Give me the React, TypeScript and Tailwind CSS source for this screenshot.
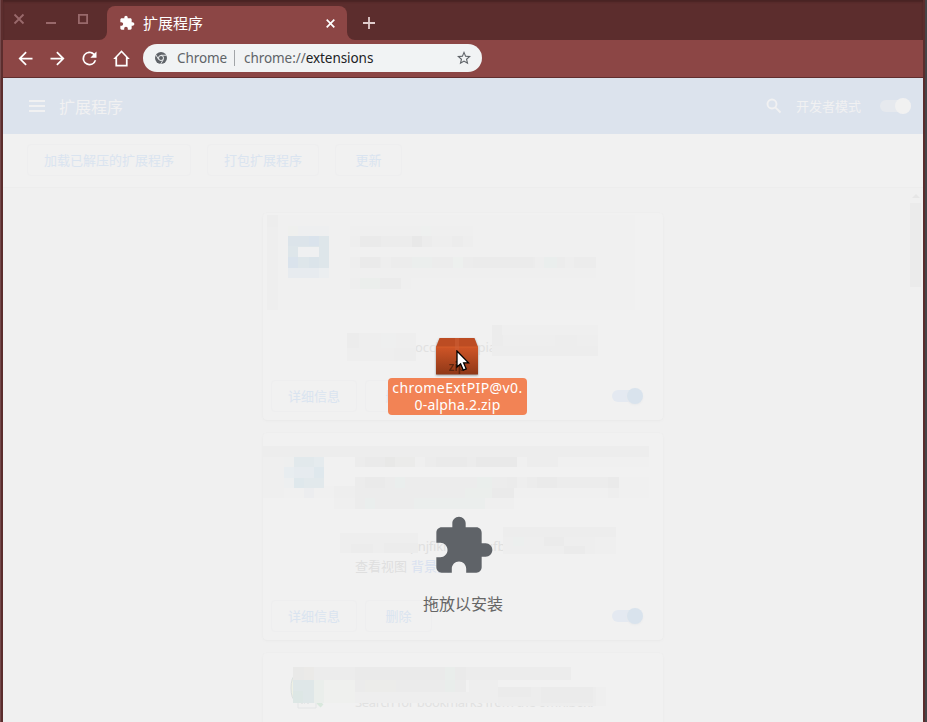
import React from "react";

type Cell = [number, number, number, number, string];

const UI = "font-['Noto_Sans','Noto_Sans_CJK_SC',sans-serif]";

function Mosaic({ cells }: { cells: Cell[] }) {
  return (
    <svg className="absolute left-0 top-0" width="400" height="207" viewBox="0 0 400 207" shapeRendering="crispEdges">
      {cells.map(([x, y, w, h, c], i) => (
        <rect key={i} x={x} y={y} width={w} height={h} fill={c} />
      ))}
    </svg>
  );
}

const firstCells: Cell[] = [
  [4, 2, 368, 95, "#f0f0f0"],
  [4, 2, 11, 95, "#eeeeee"],
  [4, 2, 11, 12, "#ededed"],
  [25, 13, 41, 10, "#eeeff0"],
  [25, 13, 10, 10, "#eff0ee"],
  [25, 23, 41, 32, "#dee6ea"],
  [25, 23, 21, 10, "#dce4ea"],
  [46, 23, 10, 10, "#dae3ec"],
  [25, 44, 10, 11, "#dae3ec"],
  [46, 44, 10, 11, "#dbe4ea"],
  [35, 34, 21, 10, "#eff0f1"],
  [25, 55, 41, 10, "#e7ebef"],
  [56, 55, 10, 10, "#ebeef0"],
  [87, 13, 123, 10, "#efefef"],
  [158, 13, 10, 10, "#eef0ef"],
  [87, 23, 123, 11, "#ececec"],
  [87, 23, 10, 11, "#eeeeee"],
  [97, 23, 21, 11, "#eaeaea"],
  [149, 23, 10, 11, "#e8e8e8"],
  [169, 23, 20, 11, "#eeeeee"],
  [200, 23, 10, 11, "#eeeeee"],
  [87, 44, 246, 11, "#ececec"],
  [87, 44, 10, 11, "#eeeeee"],
  [97, 44, 20, 11, "#eaeaea"],
  [118, 44, 10, 11, "#eeeeee"],
  [149, 44, 20, 11, "#ebeeed"],
  [190, 44, 10, 11, "#edf0ee"],
  [210, 44, 60, 11, "#ebebeb"],
  [272, 44, 9, 11, "#eeeeee"],
  [281, 44, 13, 11, "#eaeeed"],
  [302, 44, 9, 11, "#eeeeee"],
  [87, 55, 246, 10, "#efefef"],
  [87, 65, 51, 11, "#ebebeb"],
  [97, 65, 20, 11, "#ebeeec"],
  [87, 65, 10, 11, "#eeeeee"],
  [138, 65, 10, 11, "#efefef"],
  [84, 120, 69, 28, "#eeeeee"],
  [84, 120, 12, 15, "#ececec"],
  [118, 120, 15, 15, "#eeefef"],
  [131, 135, 22, 13, "#ededed"],
  [229, 112, 106, 31, "#eeeeee"],
  [229, 112, 11, 31, "#ececec"],
  [239, 112, 96, 10, "#efefef"],
  [292, 122, 22, 11, "#ededed"],
  [229, 133, 106, 10, "#ededed"],
];

const secondCells: Cell[] = [
  [0, 13, 386, 52, "#f0f0f0"],
  [0, 13, 386, 11, "#ededed"],
  [0, 24, 21, 41, "#efefef"],
  [21, 24, 10, 10, "#eeefef"],
  [21, 34, 10, 11, "#e8edf0"],
  [21, 45, 10, 10, "#edeff0"],
  [31, 24, 30, 31, "#e2e9ec"],
  [51, 24, 10, 10, "#e5ebee"],
  [31, 34, 20, 11, "#e6ebef"],
  [51, 34, 10, 11, "#dfe8ed"],
  [31, 45, 10, 10, "#dfe8ec"],
  [41, 55, 10, 10, "#ecedef"],
  [61, 24, 31, 29, "#f1f1f1"],
  [92, 24, 163, 10, "#ececec"],
  [102, 24, 20, 10, "#eaeaea"],
  [122, 24, 10, 10, "#e8e8e7"],
  [132, 24, 20, 10, "#ebebea"],
  [152, 24, 10, 10, "#efefef"],
  [173, 24, 31, 10, "#eaeaea"],
  [213, 24, 41, 10, "#e9e9e9"],
  [254, 24, 10, 10, "#f0f0f0"],
  [264, 24, 31, 10, "#ededed"],
  [92, 34, 294, 10, "#f1f1f1"],
  [92, 44, 264, 11, "#ececec"],
  [102, 44, 20, 11, "#eaeaea"],
  [132, 44, 10, 11, "#eaeeed"],
  [214, 44, 15, 11, "#eaeeec"],
  [244, 44, 10, 11, "#ebebeb"],
  [254, 44, 10, 11, "#eeeeee"],
  [274, 44, 20, 11, "#eaeaea"],
  [345, 44, 11, 11, "#eaeaea"],
  [71, 53, 21, 12, "#eeeeee"],
  [92, 55, 159, 10, "#ececec"],
  [202, 55, 27, 10, "#ebeeec"],
  [229, 55, 22, 10, "#eaeaea"],
  [345, 55, 11, 10, "#eeeeee"],
  [71, 65, 180, 11, "#efefef"],
  [92, 65, 130, 11, "#ececec"],
  [102, 65, 10, 11, "#eaeeed"],
  [151, 65, 71, 11, "#ebeeed"],
  [77, 100, 78, 20, "#eeeeee"],
  [88, 111, 22, 9, "#ececec"],
  [121, 110, 34, 10, "#ececec"],
  [240, 94, 113, 27, "#eeeeee"],
  [240, 94, 113, 10, "#ededed"],
  [250, 104, 11, 9, "#ecefee"],
  [281, 104, 20, 9, "#ebebeb"],
  [301, 113, 21, 8, "#ebebeb"],
  [332, 104, 21, 17, "#efefef"],
];

const thirdCells: Cell[] = [
  [30, 14, 278, 13, "#ececec"],
  [30, 14, 21, 13, "#e9e9e8"],
  [41, 14, 10, 13, "#ebeae8"],
  [30, 27, 21, 23, "#dfe7e8"],
  [30, 38, 10, 12, "#dde7e5"],
  [51, 27, 10, 23, "#eaeeeb"],
  [61, 27, 31, 23, "#eff0ee"],
  [92, 27, 111, 12, "#ebebeb"],
  [92, 14, 111, 13, "#eaeaea"],
  [102, 27, 31, 12, "#ececea"],
  [182, 14, 10, 25, "#e9edeb"],
  [92, 39, 143, 11, "#eeeeee"],
  [206, 27, 29, 12, "#eeeeee"],
  [235, 34, 107, 19, "#ededed"],
  [235, 34, 33, 10, "#ebebeb"],
  [278, 34, 52, 16, "#ebebeb"],
  [333, 34, 10, 19, "#efefef"],
];

function Toggle() {
  return (
    <div className="flex h-4 w-[32px] items-center">
      <div className="flex h-3 w-[30px] items-center justify-end rounded-full bg-[#e4e9f1]">
        <div className="-mr-[1px] size-4 shrink-0 rounded-full bg-[#d9e3ed] shadow-[0_1px_2px_#e8e9eb]" />
      </div>
    </div>
  );
}

function PaleButton({ children, className = "" }: { children: React.ReactNode; className?: string }) {
  return (
    <button className={`flex h-8 items-center justify-center rounded border border-[#eeeeef] pt-px text-[13px] leading-none text-[#dae4f0] ${className}`}>
      {children}
    </button>
  );
}

function Card({ cells, children }: { cells: Cell[]; children?: React.ReactNode }) {
  return (
    <section className="relative flex h-[207px] w-[400px] shrink-0 flex-col justify-end rounded bg-[#f1f1f1] shadow-[0_1px_2px_#e9e9e9,0_0_1px_#e9e9e9]">
      {children}
      <Mosaic cells={cells} />
    </section>
  );
}

function Actions() {
  return (
    <div className="flex h-12 items-center px-2 pb-px">
      <PaleButton className="w-[86px]">详细信息</PaleButton>
      <PaleButton className="ml-2 w-[67px]">删除</PaleButton>
      <div className="ml-auto mr-[11px]"><Toggle /></div>
    </div>
  );
}

function Puzzle({ className = "" }: { className?: string }) {
  return (
    <svg viewBox="0 0 24 24" fill="currentColor" className={className}>
      <path d="M20.5 11H19V7c0-1.1-.9-2-2-2h-4V3.5C13 2.12 11.88 1 10.5 1S8 2.12 8 3.5V5H4c-1.1 0-1.99.9-1.99 2v3.8H3.5c1.49 0 2.7 1.21 2.7 2.7s-1.21 2.7-2.7 2.7H2V20c0 1.1.9 2 2 2h3.8v-1.5c0-1.49 1.21-2.7 2.7-2.7 1.49 0 2.7 1.21 2.7 2.7V22H17c1.1 0 2-.9 2-2v-4h1.5c1.38 0 2.5-1.12 2.5-2.5S21.88 11 20.5 11z" />
    </svg>
  );
}

function NavIcon({ d }: { d: string }) {
  return (
    <svg viewBox="0 0 24 24" fill="currentColor" fillRule="evenodd" className="size-[21px]">
      <path d={d} />
    </svg>
  );
}

function TabStrip() {
  return (
    <header className="flex h-10 shrink-0 items-end bg-[#5c2d2d] shadow-[inset_0_2px_2px_#482323]">
      <div className="flex h-10 w-[104px] shrink-0 text-[#99696b]">
        <svg width="104" height="40" fill="none" stroke="currentColor" strokeWidth="1.8">
          <path d="M11.5 14.5l9 9M20.5 14.5l-9 9M43 23h10" />
          <path d="M75.9 14.9h8.2v8.2h-8.2z" />
        </svg>
      </div>
      <div className="relative flex h-[34px] w-60 items-center rounded-t-lg bg-[#8c4645] px-3 text-white">
        <svg className="absolute -left-2 bottom-0" width="8" height="8"><path d="M8 0v8H0a8 8 0 0 0 8-8z" fill="#8c4645" /></svg>
        <svg className="absolute -right-2 bottom-0" width="8" height="8"><path d="M0 0v8h8a8 8 0 0 1-8-8z" fill="#8c4645" /></svg>
        <Puzzle className="size-4" />
        <span className="ml-2 pb-px text-[15px] leading-5">扩展程序</span>
        <svg className="ml-auto" width="9" height="9" stroke="currentColor" strokeWidth="1.7"><path d="M.7.7l7.6 7.6M8.3.7L.7 8.3" /></svg>
      </div>
      <svg className="mb-[11px] ml-4" width="12" height="12" stroke="#e0cccc" strokeWidth="1.8"><path d="M6 0v12M0 6h12" /></svg>
    </header>
  );
}

function Toolbar() {
  return (
    <nav className="flex h-[38px] shrink-0 items-center border-b border-[#612e2e] bg-[#8c4645] pb-px pl-[11.5px] text-white">
      <div className="flex w-[128.5px] shrink-0 items-center gap-[11px]">
        <NavIcon d="M20 11H7.8l5.6-5.6L12 4l-8 8 8 8 1.4-1.4L7.8 13H20v-2z" />
        <NavIcon d="M12 4l-1.4 1.4 5.6 5.6H4v2h12.2l-5.6 5.6L12 20l8-8-8-8z" />
        <NavIcon d="M17.65 6.35A8 8 0 1 0 19.73 14h-2.08A6 6 0 1 1 12 6c1.66 0 3.14.69 4.22 1.78L13 11h7V4l-2.35 2.35z" />
        <NavIcon d="M12 2.5L2.5 12.5H5V21h14v-8.5h2.5L12 2.5zM17 19H7v-8.6l5-5.2 5 5.2V19z" />
      </div>
      <div className="flex h-7 w-[339px] items-center rounded-full bg-[#f1f3f4] pl-3 pr-[11px] text-[13.5px] text-[#606468]">
        <svg width="12" height="12" viewBox="0 0 24 24">
          <circle cx="12" cy="12" r="12" fill="#5f6368" />
          <circle cx="12" cy="12" r="5" fill="#5f6368" stroke="#f1f3f4" strokeWidth="2" />
          <path d="M12 6.5h11M7.3 15L2 6M16.7 15l-5.3 9" stroke="#f1f3f4" strokeWidth="1.8" />
        </svg>
        <span className="ml-[10px] w-[50px] whitespace-nowrap tracking-[-0.1px]">Chrome</span>
        <span className="ml-[7px] h-4 w-px bg-[#a2a5a8]" />
        <span className="ml-[9px] whitespace-nowrap tracking-[-0.06px]">chrome://<span className="text-[#202124]">extensions</span></span>
        <svg className="ml-auto size-[14px]" viewBox="2 2 20 20" fill="#5f6368">
          <path d="M22 9.24l-7.19-.62L12 2 9.19 8.63 2 9.24l5.46 4.73L5.82 21 12 17.27 18.18 21l-1.63-7.03L22 9.24zM12 15.4l-3.76 2.27 1-4.28-3.32-2.88 4.38-.38L12 6.1l1.71 4.04 4.38.38-3.32 2.88 1 4.28L12 15.4z" />
        </svg>
      </div>
    </nav>
  );
}

function DraggedFile() {
  return (
    <div className="absolute left-[388px] top-[337px] flex w-[139px] flex-col items-center">
      <svg width="46" height="41" viewBox="0 0 46 41" className="mr-[2px] drop-shadow-[0_1px_1px_#9b9b9b]">
        <defs>
          <linearGradient id="box" x2="0" y2="1"><stop stopColor="#cf5527" /><stop offset="1" stopColor="#8f3817" /></linearGradient>
        </defs>
        <path d="M2 10h42v27.5H2z" fill="url(#box)" />
        <path d="M5.5 1h35L44 10H2z" fill="#bc4c23" />
        <path d="M2 10h42" stroke="#d55c2b" />
        <path d="M21 1h4v13h-4z" fill="#cd6037" opacity=".5" />
        <text x="23" y="34" textAnchor="middle" fontFamily="Noto Sans, sans-serif" fontSize="12" fontWeight="600" fill="#5f260e">zip</text>
      </svg>
      <div className="flex h-[37px] w-[139px] flex-col items-center whitespace-nowrap rounded bg-[#f28355] pt-[1px] text-[14px] leading-[17px] text-white">
        <div className="tracking-[0.42px]">chromeExtPIP@v0.</div>
        <div className="tracking-[0.2px]">0-alpha.2.zip</div>
      </div>
      <svg className="absolute left-[68px] top-[13px]" width="14" height="22" viewBox="0 0 14 22">
        <path d="M1 1v16l3.6-3.2 2.6 6.3 3-1.3-2.6-6H12.5z" fill="#fff" stroke="#000" strokeWidth="1.3" />
      </svg>
    </div>
  );
}

function ExtensionsPage() {
  return (
    <main className="relative flex min-h-0 flex-1 flex-col overflow-hidden bg-[#f0f0f0]">
      <div className="flex h-14 shrink-0 items-center bg-[#dce3ed] pl-[26px] pr-3 text-[#f1f1f2]">
        <svg width="16" height="12" fill="currentColor"><path d="M0 0h16v2H0zM0 5h16v2H0zM0 10h16v2H0z" /></svg>
        <h1 className="ml-[14px] pt-[2px] text-[16px] leading-6">扩展程序</h1>
        <svg className="ml-auto" width="16" height="16" fill="none" stroke="currentColor" strokeWidth="1.9"><circle cx="6" cy="6" r="4.5" /><path d="M9.3 9.3l5.2 5.2" /></svg>
        <span className="ml-[14px] pt-[2px] text-[13px]">开发者模式</span>
        <div className="ml-[19px] flex h-3 w-[31px] items-center justify-end rounded-full bg-[#e6e9ee]">
          <div className="size-4 shrink-0 rounded-full bg-[#f1f1f1]" />
        </div>
      </div>
      <div className="flex h-[54px] shrink-0 items-center border-b border-[#ededed] bg-[#f1f1f1] px-6 pb-[2px]">
        <PaleButton className="w-[164px]">加载已解压的扩展程序</PaleButton>
        <PaleButton className="ml-4 w-[112px]">打包扩展程序</PaleButton>
        <PaleButton className="ml-4 w-[67px]">更新</PaleButton>
      </div>
      <div className="flex min-h-0 flex-1 flex-col items-center gap-[13px] pt-[25px]">
        <Card cells={firstCells}>
          <div className="mb-[14px] flex h-5 items-center pl-[152px] text-[13px] text-[#e1e1e1]">
            <span>occh</span><span className="ml-[34px]">pia</span>
          </div>
          <Actions />
        </Card>
        <Card cells={secondCells}>
          <div className="flex h-5 items-center pl-[147px] text-[13px] text-[#dfdfdf]">
            <span className="tracking-[-0.2px]">pnjfikm</span><span className="ml-[30px]">ufb</span>
          </div>
          <div className="mb-[15px] flex h-5 items-center gap-1 pl-[92px] text-[13px] text-[#dfdfdf]">
            <span>查看视图</span><span className="text-[#d9e1f0]">背景页</span>
          </div>
          <Actions />
        </Card>
        <Card cells={thirdCells}>
          <svg className="absolute left-[26px] top-[21px]" width="36" height="36" fill="none">
            <ellipse cx="6" cy="14" rx="4" ry="12" stroke="#d9dfdf" fill="#eef0e4" />
            <path d="M9 14v20h18V14" stroke="#e3e5e6" />
            <path d="M12 29h4m2 0h3" stroke="#dadcdd" strokeDasharray="2 1" />
            <path d="M29 28l4 4" stroke="#d9e8dd" strokeWidth="4" />
          </svg>
          <div className="absolute left-[92px] top-[39px] whitespace-nowrap text-[13px] leading-5 tracking-[-0.35px] text-[#e1e1e1]">Search for bookmarks from the omnibox.</div>
        </Card>
      </div>
      <div className="absolute right-0 top-[110px] flex h-[534px] w-[15px] flex-col items-center pt-[6px]">
        <svg width="8" height="4" fill="#e6e6e6"><path d="M4 0l4 4H0z" /></svg>
        <div className="mt-[5px] h-[84px] w-[11px] bg-[#ebebeb]" />
      </div>
      <div className="absolute inset-x-0 top-[436px] flex flex-col items-center text-[#5f6368]">
        <Puzzle className="size-16" />
        <p className="mt-[14px] text-[16px] leading-6 text-[#666]">拖放以安装</p>
      </div>
    </main>
  );
}

export default function App() {
  return (
    <div className={`relative flex h-[722px] w-[927px] overflow-hidden bg-[#464447] ${UI}`}>
      <div className="w-px shrink-0 bg-[#74494b]" />
      <div className="flex w-[924px] shrink-0 flex-col border-l-2 border-r-2 border-[#5c2d2d]">
        <TabStrip />
        <Toolbar />
        <ExtensionsPage />
      </div>
      <DraggedFile />
    </div>
  );
}
